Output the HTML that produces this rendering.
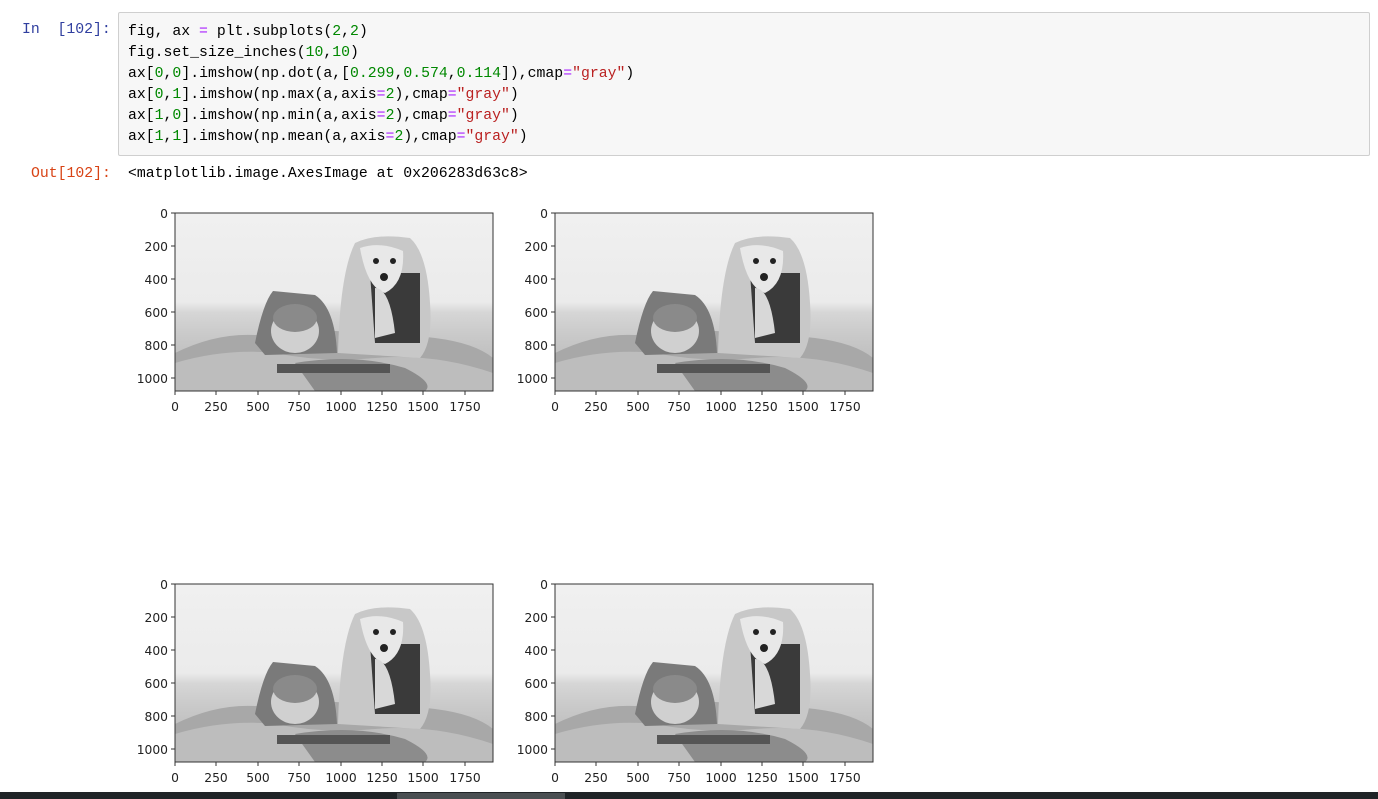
<!DOCTYPE html>
<html><head><meta charset="utf-8"><style>
body{margin:0;width:1378px;height:799px;background:#fff;position:relative;overflow:hidden;font-family:"Liberation Mono","Noto Sans CJK SC",monospace;}
.prompt{position:absolute;font-size:14.8px;line-height:21px;}
.code{position:absolute;left:118px;top:12px;width:1250px;height:142px;background:#f7f7f7;border:1px solid #cfcfcf;border-radius:2px;}
.code pre{margin:0;position:absolute;left:9px;top:9px;font-family:"Liberation Mono","Noto Sans CJK SC",monospace;font-size:14.8px;line-height:21px;color:#000;}
.o{color:#aa22ff}.n{color:#008800}.s{color:#ba2121}
svg{position:absolute;left:0;top:0}
.t{font-family:"DejaVu Sans","Liberation Sans",sans-serif;font-size:12.3px;fill:#222}
</style></head><body>
<div class="prompt" style="left:22px;top:20px;color:#303f9f">In&nbsp;&nbsp;[102]:</div>
<div class="code"><pre>fig, ax <span class="o">=</span> plt.subplots(<span class="n">2</span>,<span class="n">2</span>)
fig.set_size_inches(<span class="n">10</span>,<span class="n">10</span>)
ax[<span class="n">0</span>,<span class="n">0</span>].imshow(np.dot(a,[<span class="n">0.299</span>,<span class="n">0.574</span>,<span class="n">0.114</span>]),cmap<span class="o">=</span><span class="s">"gray"</span>)
ax[<span class="n">0</span>,<span class="n">1</span>].imshow(np.max(a,axis<span class="o">=</span><span class="n">2</span>),cmap<span class="o">=</span><span class="s">"gray"</span>)
ax[<span class="n">1</span>,<span class="n">0</span>].imshow(np.min(a,axis<span class="o">=</span><span class="n">2</span>),cmap<span class="o">=</span><span class="s">"gray"</span>)
ax[<span class="n">1</span>,<span class="n">1</span>].imshow(np.mean(a,axis<span class="o">=</span><span class="n">2</span>),cmap<span class="o">=</span><span class="s">"gray"</span>)</pre></div>
<div class="prompt" style="left:31px;top:164px;color:#d84315">Out[102]:</div>
<div class="prompt" style="left:128px;top:164px;color:#000">&lt;matplotlib.image.AxesImage at 0x206283d63c8&gt;</div>

<svg width="1378" height="799">
<defs>
<linearGradient id="bg" x1="0" y1="0" x2="0" y2="1">
<stop offset="0" stop-color="#f0f0f0"/><stop offset="0.5" stop-color="#ebebeb"/><stop offset="0.56" stop-color="#d6d6d6"/><stop offset="0.68" stop-color="#cacaca"/><stop offset="1" stop-color="#b0b0b0"/>
</linearGradient>
<g id="img">
<rect x="0" y="0" width="318" height="178" fill="url(#bg)"/>
<path d="M0 140 Q40 120 80 122 L160 118 Q220 120 260 125 Q300 130 318 145 L318 178 L0 178Z" fill="#a8a8a8"/>
<path d="M0 150 Q50 135 100 140 Q150 150 200 145 Q260 140 318 160 L318 178 L0 178Z" fill="#bdbdbd"/>
<path d="M120 150 Q180 140 230 155 Q260 170 250 178 L140 178Z" fill="#8c8c8c"/>
<path d="M80 130 Q88 90 98 78 L140 82 Q160 95 162 140 L90 142Z" fill="#7a7a7a"/>
<ellipse cx="120" cy="118" rx="24" ry="22" fill="#d0d0d0"/>
<ellipse cx="120" cy="105" rx="22" ry="14" fill="#8a8a8a"/>
<path d="M163 140 Q165 60 180 30 Q200 20 235 25 Q252 40 255 90 Q258 130 245 145Z" fill="#c8c8c8"/>
<path d="M195 60 L245 60 L245 130 L200 130Z" fill="#3a3a3a"/>
<path d="M185 35 Q205 28 228 38 Q230 70 210 80 Q192 75 185 35Z" fill="#e8e8e8"/>
<path d="M200 75 Q215 75 220 120 L200 125Z" fill="#d8d8d8"/>
<circle cx="201" cy="48" r="3" fill="#222"/><circle cx="218" cy="48" r="3" fill="#222"/><circle cx="209" cy="64" r="4" fill="#222"/>
<rect x="102" y="151" width="113" height="9" fill="#555"/>
</g>
<g id="ax">
<rect x="0" y="0" width="318" height="178" fill="none" stroke="#333" stroke-width="1"/>
<g stroke="#333"><line x1="0" y1="0" x2="-4" y2="0"/><line x1="0" y1="33" x2="-4" y2="33"/><line x1="0" y1="66" x2="-4" y2="66"/><line x1="0" y1="99" x2="-4" y2="99"/><line x1="0" y1="132" x2="-4" y2="132"/><line x1="0" y1="165" x2="-4" y2="165"/>
<line x1="0" y1="178" x2="0" y2="182"/><line x1="41" y1="178" x2="41" y2="182"/><line x1="83" y1="178" x2="83" y2="182"/><line x1="124" y1="178" x2="124" y2="182"/><line x1="166" y1="178" x2="166" y2="182"/><line x1="207" y1="178" x2="207" y2="182"/><line x1="248" y1="178" x2="248" y2="182"/><line x1="290" y1="178" x2="290" y2="182"/></g>
</g>
</defs>
</svg>

<svg width="1378" height="799">
<g transform="translate(175,213)">
<use href="#img"/><use href="#ax"/>
<g class="t" text-anchor="end"><text x="-7" y="5">0</text><text x="-7" y="38">200</text><text x="-7" y="71">400</text><text x="-7" y="104">600</text><text x="-7" y="137">800</text><text x="-7" y="170">1000</text></g>
<g class="t" text-anchor="middle"><text x="0" y="198">0</text><text x="41" y="198">250</text><text x="83" y="198">500</text><text x="124" y="198">750</text><text x="166" y="198">1000</text><text x="207" y="198">1250</text><text x="248" y="198">1500</text><text x="290" y="198">1750</text></g>
</g>
<g transform="translate(555,213)">
<use href="#img"/><use href="#ax"/>
<g class="t" text-anchor="end"><text x="-7" y="5">0</text><text x="-7" y="38">200</text><text x="-7" y="71">400</text><text x="-7" y="104">600</text><text x="-7" y="137">800</text><text x="-7" y="170">1000</text></g>
<g class="t" text-anchor="middle"><text x="0" y="198">0</text><text x="41" y="198">250</text><text x="83" y="198">500</text><text x="124" y="198">750</text><text x="166" y="198">1000</text><text x="207" y="198">1250</text><text x="248" y="198">1500</text><text x="290" y="198">1750</text></g>
</g>
<g transform="translate(175,584)">
<use href="#img"/><use href="#ax"/>
<g class="t" text-anchor="end"><text x="-7" y="5">0</text><text x="-7" y="38">200</text><text x="-7" y="71">400</text><text x="-7" y="104">600</text><text x="-7" y="137">800</text><text x="-7" y="170">1000</text></g>
<g class="t" text-anchor="middle"><text x="0" y="198">0</text><text x="41" y="198">250</text><text x="83" y="198">500</text><text x="124" y="198">750</text><text x="166" y="198">1000</text><text x="207" y="198">1250</text><text x="248" y="198">1500</text><text x="290" y="198">1750</text></g>
</g>
<g transform="translate(555,584)">
<use href="#img"/><use href="#ax"/>
<g class="t" text-anchor="end"><text x="-7" y="5">0</text><text x="-7" y="38">200</text><text x="-7" y="71">400</text><text x="-7" y="104">600</text><text x="-7" y="137">800</text><text x="-7" y="170">1000</text></g>
<g class="t" text-anchor="middle"><text x="0" y="198">0</text><text x="41" y="198">250</text><text x="83" y="198">500</text><text x="124" y="198">750</text><text x="166" y="198">1000</text><text x="207" y="198">1250</text><text x="248" y="198">1500</text><text x="290" y="198">1750</text></g>
</g>
<rect x="0" y="792" width="1378" height="7" fill="#1f2427"/>
<rect x="397" y="793" width="168" height="6" fill="#4a4f52"/>
</svg>
</body></html>
